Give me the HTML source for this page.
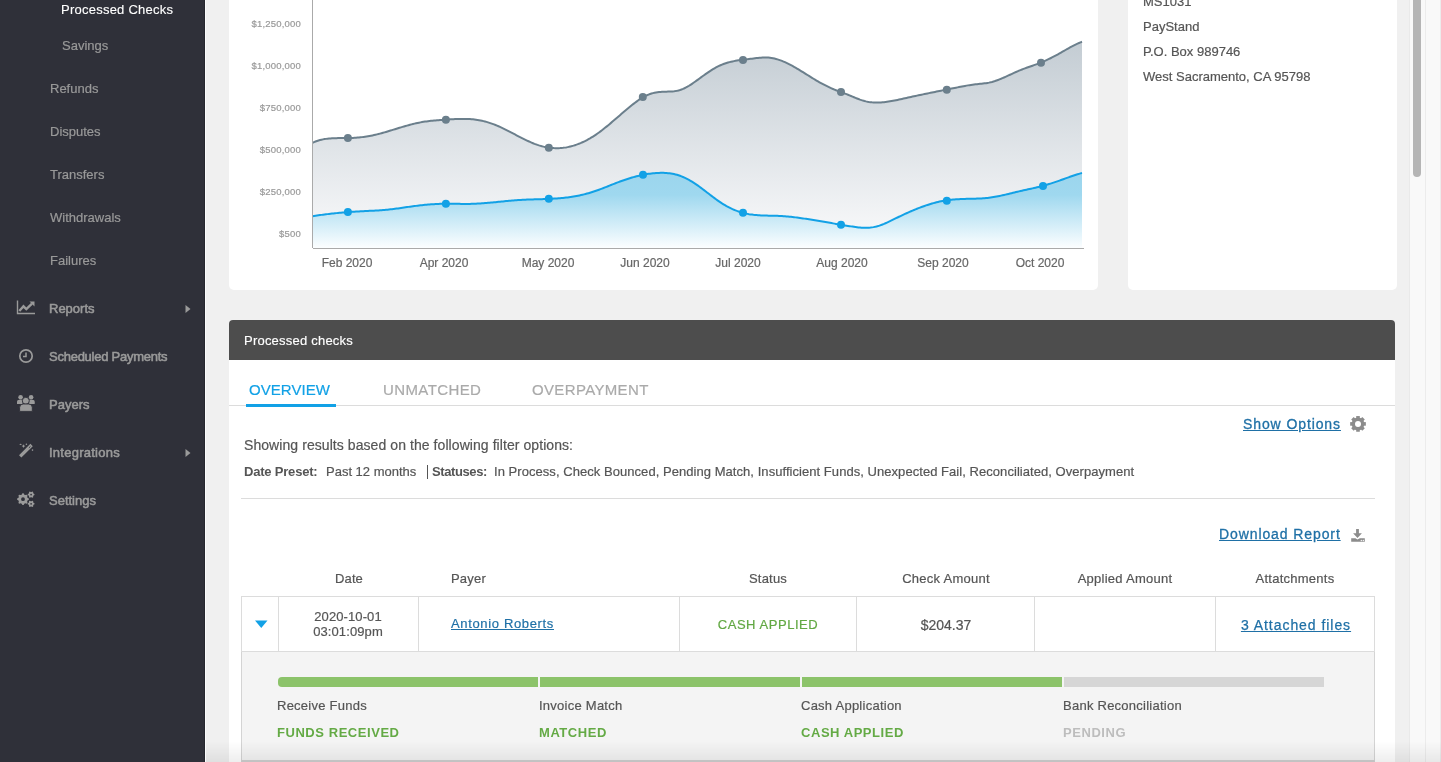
<!DOCTYPE html>
<html><head><meta charset="utf-8"><style>
html,body{margin:0;padding:0;}
body{width:1441px;height:762px;overflow:hidden;position:relative;background:#f0f0f0;font-family:"Liberation Sans",sans-serif;}
.t{position:absolute;white-space:nowrap;will-change:transform;-webkit-text-stroke-width:0.2px;}
.a{position:absolute;}
</style></head><body>
<div class="a" style="left:0;top:0;width:204px;height:762px;background:#2f3039;"></div><div class="a" style="left:204px;top:0;width:1px;height:762px;background:#26272e;"></div><div class="a" style="left:205px;top:0;width:1px;height:762px;background:#fbfbfc;"></div><div class="t" style="left:61.0px;top:3.00px;font-size:13px;line-height:13px;color:#ffffff;letter-spacing:0.24px;-webkit-text-stroke:0.12px #fff;">Processed Checks</div>
<div class="t" style="left:62.0px;top:39.00px;font-size:13px;line-height:13px;color:#999;">Savings</div>
<div class="t" style="left:50.0px;top:81.80px;font-size:13px;line-height:13px;color:#999;">Refunds</div>
<div class="t" style="left:50.0px;top:124.80px;font-size:13px;line-height:13px;color:#999;">Disputes</div>
<div class="t" style="left:50.0px;top:167.80px;font-size:13px;line-height:13px;color:#999;">Transfers</div>
<div class="t" style="left:50.0px;top:210.80px;font-size:13px;line-height:13px;color:#999;">Withdrawals</div>
<div class="t" style="left:50.0px;top:253.80px;font-size:13px;line-height:13px;color:#999;">Failures</div>
<div class="t" style="left:49.0px;top:302.20px;font-size:13px;line-height:13px;color:#9a9a9a;-webkit-text-stroke:0.55px #9a9a9a;">Reports</div>
<div class="t" style="left:49.0px;top:350.20px;font-size:13px;line-height:13px;color:#9a9a9a;-webkit-text-stroke:0.55px #9a9a9a;letter-spacing:-0.25px;">Scheduled Payments</div>
<div class="t" style="left:49.0px;top:398.20px;font-size:13px;line-height:13px;color:#9a9a9a;-webkit-text-stroke:0.55px #9a9a9a;">Payers</div>
<div class="t" style="left:49.0px;top:446.20px;font-size:13px;line-height:13px;color:#9a9a9a;-webkit-text-stroke:0.55px #9a9a9a;letter-spacing:0.25px;">Integrations</div>
<div class="t" style="left:49.0px;top:494.20px;font-size:13px;line-height:13px;color:#9a9a9a;-webkit-text-stroke:0.55px #9a9a9a;">Settings</div>
<svg class="a" style="left:16px;top:300px" width="20" height="15" viewBox="0 0 20 15">
<path d="M1.5 0.5 V13.5 H19" fill="none" stroke="#9a9a9a" stroke-width="1.4"/>
<path d="M3.3 11 L7.5 6.3 L10.3 9 L16 3.6" fill="none" stroke="#9a9a9a" stroke-width="2.4"/>
<path d="M13.5 1.5 H18.5 V6.5 Z" fill="#9a9a9a"/>
</svg><svg class="a" style="left:185px;top:304px" width="6" height="10" viewBox="0 0 6 10"><path d="M0.5 1 L5.5 5 L0.5 9 Z" fill="#9a9a9a"/></svg><svg class="a" style="left:185px;top:448px" width="6" height="10" viewBox="0 0 6 10"><path d="M0.5 1 L5.5 5 L0.5 9 Z" fill="#9a9a9a"/></svg><svg class="a" style="left:18px;top:348px" width="16" height="16" viewBox="0 0 16 16">
<circle cx="8" cy="8" r="6.2" fill="none" stroke="#9a9a9a" stroke-width="1.7"/>
<path d="M8 4.5 V8.5 H5" fill="none" stroke="#9a9a9a" stroke-width="1.5"/>
</svg><svg class="a" style="left:14px;top:392px" width="24" height="22" viewBox="0 0 24 22">
<circle cx="6.6" cy="5.3" r="2.3" fill="#9a9a9a"/><circle cx="17.1" cy="5.3" r="2.3" fill="#9a9a9a"/>
<path d="M3 12.1 V10.2 Q3 7.8 5.6 7.8 H8.6 V12.1 Z" fill="#9a9a9a"/>
<path d="M20.7 12.1 V10.2 Q20.7 7.8 18.1 7.8 H15.1 V12.1 Z" fill="#9a9a9a"/>
<circle cx="11.8" cy="8.8" r="3.5" fill="#9a9a9a" stroke="#2f3039" stroke-width="0.9"/>
<path d="M5.6 19.4 V15.6 Q5.6 12 9.2 12 H14.6 Q18.3 12 18.3 15.6 V19.4 Z" fill="#9a9a9a" stroke="#2f3039" stroke-width="0.9"/>
</svg><svg class="a" style="left:14px;top:440px" width="24" height="22" viewBox="0 0 24 22">
<path d="M6.2 16.4 L17.6 5.0" stroke="#9a9a9a" stroke-width="3.3" stroke-linecap="butt"/>
<path d="M14.9 7.9 L16.5 6.3" stroke="#2f3039" stroke-width="0.9"/>
<path d="M9.5 4.2 L10.1 5.5 L11.4 6.1 L10.1 6.7 L9.5 8.0 L8.9 6.7 L7.6 6.1 L8.9 5.5 Z" fill="#9a9a9a"/>
<ellipse cx="6.6" cy="4.3" rx="1.1" ry="0.6" fill="#9a9a9a"/>
<circle cx="12.4" cy="4.3" r="0.8" fill="#9a9a9a"/>
<circle cx="18.5" cy="10.1" r="0.8" fill="#9a9a9a"/>
</svg><svg class="a" style="left:17px;top:491px" width="18" height="17" viewBox="0 0 18 17">
<path fill-rule="evenodd" d="M11.87 7.62 L11.87 8.78 L10.50 9.56 L10.15 10.42 L10.56 11.94 L9.74 12.76 L8.22 12.35 L7.36 12.70 L6.58 14.07 L5.42 14.07 L4.64 12.70 L3.78 12.35 L2.26 12.76 L1.44 11.94 L1.85 10.42 L1.50 9.56 L0.13 8.78 L0.13 7.62 L1.50 6.84 L1.85 5.98 L1.44 4.46 L2.26 3.64 L3.78 4.05 L4.64 3.70 L5.42 2.33 L6.58 2.33 L7.36 3.70 L8.22 4.05 L9.74 3.64 L10.56 4.46 L10.15 5.98 L10.50 6.84 Z M7.90 8.20 A1.9 1.9 0 1 0 4.10 8.20 A1.9 1.9 0 1 0 7.90 8.20 Z" fill="#9a9a9a"/>
<path fill-rule="evenodd" d="M17.47 3.16 L17.47 4.04 L16.50 4.59 L16.16 5.18 L16.17 6.30 L15.40 6.74 L14.44 6.18 L13.76 6.18 L12.80 6.74 L12.03 6.30 L12.04 5.18 L11.70 4.59 L10.73 4.04 L10.73 3.16 L11.70 2.61 L12.04 2.02 L12.03 0.90 L12.80 0.46 L13.76 1.02 L14.44 1.02 L15.40 0.46 L16.17 0.90 L16.16 2.02 L16.50 2.61 Z M14.95 3.60 A0.85 0.85 0 1 0 13.25 3.60 A0.85 0.85 0 1 0 14.95 3.60 Z" fill="#9a9a9a"/>
<path fill-rule="evenodd" d="M17.47 12.36 L17.47 13.24 L16.50 13.79 L16.16 14.38 L16.17 15.50 L15.40 15.94 L14.44 15.38 L13.76 15.38 L12.80 15.94 L12.03 15.50 L12.04 14.38 L11.70 13.79 L10.73 13.24 L10.73 12.36 L11.70 11.81 L12.04 11.22 L12.03 10.10 L12.80 9.66 L13.76 10.22 L14.44 10.22 L15.40 9.66 L16.17 10.10 L16.16 11.22 L16.50 11.81 Z M14.95 12.80 A0.85 0.85 0 1 0 13.25 12.80 A0.85 0.85 0 1 0 14.95 12.80 Z" fill="#9a9a9a"/>
</svg><div class="a" style="left:229px;top:-20px;width:869px;height:310px;background:#fff;border-radius:5px;"></div><div class="t" style="left:-299.2px;width:600px;text-align:right;top:19.16px;font-size:9.5px;line-height:9.5px;color:#999;letter-spacing:0.2px;">$1,250,000</div>
<div class="t" style="left:-299.2px;width:600px;text-align:right;top:61.16px;font-size:9.5px;line-height:9.5px;color:#999;letter-spacing:0.2px;">$1,000,000</div>
<div class="t" style="left:-299.2px;width:600px;text-align:right;top:103.16px;font-size:9.5px;line-height:9.5px;color:#999;letter-spacing:0.2px;">$750,000</div>
<div class="t" style="left:-299.2px;width:600px;text-align:right;top:145.16px;font-size:9.5px;line-height:9.5px;color:#999;letter-spacing:0.2px;">$500,000</div>
<div class="t" style="left:-299.2px;width:600px;text-align:right;top:187.16px;font-size:9.5px;line-height:9.5px;color:#999;letter-spacing:0.2px;">$250,000</div>
<div class="t" style="left:-299.2px;width:600px;text-align:right;top:229.16px;font-size:9.5px;line-height:9.5px;color:#999;letter-spacing:0.2px;">$500</div>
<div class="t" style="left:46.7px;width:600px;text-align:center;top:256.74px;font-size:12px;line-height:12px;color:#666;">Feb 2020</div>
<div class="t" style="left:143.8px;width:600px;text-align:center;top:256.74px;font-size:12px;line-height:12px;color:#666;">Apr 2020</div>
<div class="t" style="left:247.9px;width:600px;text-align:center;top:256.74px;font-size:12px;line-height:12px;color:#666;">May 2020</div>
<div class="t" style="left:345.3px;width:600px;text-align:center;top:256.74px;font-size:12px;line-height:12px;color:#666;">Jun 2020</div>
<div class="t" style="left:438.3px;width:600px;text-align:center;top:256.74px;font-size:12px;line-height:12px;color:#666;">Jul 2020</div>
<div class="t" style="left:542.0px;width:600px;text-align:center;top:256.74px;font-size:12px;line-height:12px;color:#666;">Aug 2020</div>
<div class="t" style="left:642.9px;width:600px;text-align:center;top:256.74px;font-size:12px;line-height:12px;color:#666;">Sep 2020</div>
<div class="t" style="left:740.0px;width:600px;text-align:center;top:256.74px;font-size:12px;line-height:12px;color:#666;">Oct 2020</div>
<svg class="a" style="left:0;top:0" width="1441" height="300" viewBox="0 0 1441 300">
<defs>
<linearGradient id="gg" x1="0" y1="41" x2="0" y2="248" gradientUnits="userSpaceOnUse">
<stop offset="0" stop-color="#c3ccd3"/><stop offset="1" stop-color="#fbfbfc"/></linearGradient>
<linearGradient id="bg" x1="0" y1="172" x2="0" y2="248" gradientUnits="userSpaceOnUse">
<stop offset="0" stop-color="#9bd5ed"/><stop offset="0.3" stop-color="#9fd8ef"/><stop offset="1" stop-color="#fcfeff"/></linearGradient>
</defs>
<path d="M312.50 142.79 L314.00 142.12 L315.50 141.52 L317.00 140.98 L318.50 140.50 L320.00 140.08 L321.50 139.71 L323.00 139.39 L324.50 139.11 L326.00 138.88 L327.50 138.69 L329.00 138.53 L330.50 138.40 L332.00 138.30 L333.50 138.23 L335.00 138.17 L336.50 138.14 L338.00 138.11 L339.50 138.10 L341.00 138.09 L342.50 138.09 L344.00 138.09 L345.50 138.08 L347.00 138.06 L348.50 138.04 L350.00 138.00 L351.50 137.95 L353.00 137.88 L354.50 137.79 L356.00 137.70 L357.50 137.58 L359.00 137.45 L360.50 137.30 L362.00 137.13 L363.50 136.95 L365.00 136.74 L366.50 136.52 L368.00 136.27 L369.50 136.00 L371.00 135.72 L372.50 135.41 L374.00 135.08 L375.50 134.74 L377.00 134.38 L378.50 134.00 L380.00 133.61 L381.50 133.20 L383.00 132.78 L384.50 132.36 L386.00 131.92 L387.50 131.48 L389.00 131.03 L390.50 130.57 L392.00 130.11 L393.50 129.65 L395.00 129.19 L396.50 128.72 L398.00 128.26 L399.50 127.80 L401.00 127.35 L402.50 126.89 L404.00 126.45 L405.50 126.01 L407.00 125.59 L408.50 125.17 L410.00 124.76 L411.50 124.37 L413.00 123.99 L414.50 123.63 L416.00 123.28 L417.50 122.95 L419.00 122.65 L420.50 122.36 L422.00 122.09 L423.50 121.84 L425.00 121.61 L426.50 121.40 L428.00 121.21 L429.50 121.03 L431.00 120.86 L432.50 120.70 L434.00 120.56 L435.50 120.43 L437.00 120.30 L438.50 120.18 L440.00 120.07 L441.50 119.97 L443.00 119.86 L444.50 119.76 L446.00 119.66 L447.50 119.56 L449.00 119.46 L450.50 119.37 L452.00 119.28 L453.50 119.19 L455.00 119.11 L456.50 119.04 L458.00 118.99 L459.50 118.94 L461.00 118.91 L462.50 118.89 L464.00 118.89 L465.50 118.91 L467.00 118.95 L468.50 119.01 L470.00 119.09 L471.50 119.20 L473.00 119.33 L474.50 119.49 L476.00 119.68 L477.50 119.90 L479.00 120.15 L480.50 120.43 L482.00 120.75 L483.50 121.10 L485.00 121.49 L486.50 121.90 L488.00 122.35 L489.50 122.83 L491.00 123.33 L492.50 123.87 L494.00 124.43 L495.50 125.02 L497.00 125.64 L498.50 126.28 L500.00 126.94 L501.50 127.63 L503.00 128.34 L504.50 129.06 L506.00 129.81 L507.50 130.57 L509.00 131.34 L510.50 132.11 L512.00 132.90 L513.50 133.69 L515.00 134.48 L516.50 135.27 L518.00 136.06 L519.50 136.84 L521.00 137.61 L522.50 138.37 L524.00 139.13 L525.50 139.86 L527.00 140.58 L528.50 141.28 L530.00 141.96 L531.50 142.61 L533.00 143.23 L534.50 143.83 L536.00 144.39 L537.50 144.92 L539.00 145.41 L540.50 145.86 L542.00 146.28 L543.50 146.65 L545.00 146.98 L546.50 147.27 L548.00 147.52 L549.50 147.73 L551.00 147.90 L552.50 148.03 L554.00 148.12 L555.50 148.17 L557.00 148.18 L558.50 148.14 L560.00 148.07 L561.50 147.96 L563.00 147.81 L564.50 147.62 L566.00 147.39 L567.50 147.12 L569.00 146.81 L570.50 146.46 L572.00 146.08 L573.50 145.65 L575.00 145.18 L576.50 144.68 L578.00 144.13 L579.50 143.55 L581.00 142.93 L582.50 142.26 L584.00 141.56 L585.50 140.83 L587.00 140.05 L588.50 139.23 L590.00 138.38 L591.50 137.48 L593.00 136.55 L594.50 135.58 L596.00 134.57 L597.50 133.53 L599.00 132.45 L600.50 131.34 L602.00 130.20 L603.50 129.03 L605.00 127.84 L606.50 126.63 L608.00 125.40 L609.50 124.15 L611.00 122.89 L612.50 121.61 L614.00 120.33 L615.50 119.03 L617.00 117.74 L618.50 116.44 L620.00 115.14 L621.50 113.85 L623.00 112.56 L624.50 111.27 L626.00 110.00 L627.50 108.74 L629.00 107.50 L630.50 106.27 L632.00 105.06 L633.50 103.88 L635.00 102.72 L636.50 101.59 L638.00 100.50 L639.50 99.45 L641.00 98.46 L642.50 97.54 L644.00 96.70 L645.50 95.93 L647.00 95.24 L648.50 94.62 L650.00 94.07 L651.50 93.58 L653.00 93.15 L654.50 92.79 L656.00 92.48 L657.50 92.23 L659.00 92.03 L660.50 91.89 L662.00 91.78 L663.50 91.71 L665.00 91.67 L666.50 91.63 L668.00 91.60 L669.50 91.56 L671.00 91.49 L672.50 91.40 L674.00 91.26 L675.50 91.06 L677.00 90.81 L678.50 90.47 L680.00 90.05 L681.50 89.53 L683.00 88.93 L684.50 88.24 L686.00 87.47 L687.50 86.64 L689.00 85.75 L690.50 84.80 L692.00 83.81 L693.50 82.79 L695.00 81.73 L696.50 80.66 L698.00 79.57 L699.50 78.47 L701.00 77.37 L702.50 76.29 L704.00 75.21 L705.50 74.15 L707.00 73.10 L708.50 72.08 L710.00 71.09 L711.50 70.13 L713.00 69.20 L714.50 68.31 L716.00 67.47 L717.50 66.67 L719.00 65.92 L720.50 65.22 L722.00 64.59 L723.50 64.00 L725.00 63.47 L726.50 62.98 L728.00 62.53 L729.50 62.13 L731.00 61.76 L732.50 61.43 L734.00 61.12 L735.50 60.85 L737.00 60.59 L738.50 60.36 L740.00 60.14 L741.50 59.94 L743.00 59.75 L744.50 59.56 L746.00 59.38 L747.50 59.20 L749.00 59.02 L750.50 58.83 L752.00 58.64 L753.50 58.44 L755.00 58.25 L756.50 58.07 L758.00 57.90 L759.50 57.76 L761.00 57.64 L762.50 57.55 L764.00 57.49 L765.50 57.48 L767.00 57.52 L768.50 57.60 L770.00 57.75 L771.50 57.95 L773.00 58.22 L774.50 58.54 L776.00 58.92 L777.50 59.35 L779.00 59.83 L780.50 60.36 L782.00 60.93 L783.50 61.55 L785.00 62.20 L786.50 62.89 L788.00 63.62 L789.50 64.38 L791.00 65.16 L792.50 65.98 L794.00 66.81 L795.50 67.67 L797.00 68.55 L798.50 69.45 L800.00 70.36 L801.50 71.28 L803.00 72.21 L804.50 73.14 L806.00 74.08 L807.50 75.02 L809.00 75.96 L810.50 76.89 L812.00 77.82 L813.50 78.74 L815.00 79.65 L816.50 80.54 L818.00 81.42 L819.50 82.27 L821.00 83.11 L822.50 83.92 L824.00 84.71 L825.50 85.47 L827.00 86.22 L828.50 86.94 L830.00 87.64 L831.50 88.33 L833.00 88.99 L834.50 89.63 L836.00 90.25 L837.50 90.84 L839.00 91.42 L840.50 91.98 L842.00 92.53 L843.50 93.06 L845.00 93.61 L846.50 94.18 L848.00 94.77 L849.50 95.38 L851.00 96.01 L852.50 96.63 L854.00 97.25 L855.50 97.87 L857.00 98.46 L858.50 99.04 L860.00 99.59 L861.50 100.10 L863.00 100.57 L864.50 101.00 L866.00 101.37 L867.50 101.68 L869.00 101.95 L870.50 102.16 L872.00 102.32 L873.50 102.44 L875.00 102.52 L876.50 102.55 L878.00 102.55 L879.50 102.50 L881.00 102.43 L882.50 102.31 L884.00 102.17 L885.50 102.00 L887.00 101.81 L888.50 101.59 L890.00 101.35 L891.50 101.09 L893.00 100.81 L894.50 100.52 L896.00 100.21 L897.50 99.90 L899.00 99.57 L900.50 99.24 L902.00 98.91 L903.50 98.57 L905.00 98.23 L906.50 97.90 L908.00 97.57 L909.50 97.24 L911.00 96.91 L912.50 96.58 L914.00 96.26 L915.50 95.94 L917.00 95.62 L918.50 95.30 L920.00 94.99 L921.50 94.67 L923.00 94.36 L924.50 94.05 L926.00 93.74 L927.50 93.43 L929.00 93.12 L930.50 92.81 L932.00 92.51 L933.50 92.20 L935.00 91.90 L936.50 91.59 L938.00 91.29 L939.50 90.99 L941.00 90.69 L942.50 90.38 L944.00 90.08 L945.50 89.78 L947.00 89.48 L948.50 89.18 L950.00 88.88 L951.50 88.57 L953.00 88.27 L954.50 87.97 L956.00 87.66 L957.50 87.36 L959.00 87.06 L960.50 86.76 L962.00 86.47 L963.50 86.18 L965.00 85.91 L966.50 85.64 L968.00 85.38 L969.50 85.14 L971.00 84.91 L972.50 84.69 L974.00 84.49 L975.50 84.32 L977.00 84.15 L978.50 84.00 L980.00 83.85 L981.50 83.70 L983.00 83.54 L984.50 83.36 L986.00 83.15 L987.50 82.90 L989.00 82.62 L990.50 82.29 L992.00 81.91 L993.50 81.48 L995.00 81.01 L996.50 80.49 L998.00 79.94 L999.50 79.36 L1001.00 78.76 L1002.50 78.12 L1004.00 77.47 L1005.50 76.80 L1007.00 76.12 L1008.50 75.43 L1010.00 74.74 L1011.50 74.04 L1013.00 73.35 L1014.50 72.66 L1016.00 71.99 L1017.50 71.33 L1019.00 70.69 L1020.50 70.07 L1022.00 69.48 L1023.50 68.91 L1025.00 68.35 L1026.50 67.81 L1028.00 67.28 L1029.50 66.75 L1031.00 66.23 L1032.50 65.70 L1034.00 65.17 L1035.50 64.64 L1037.00 64.09 L1038.50 63.52 L1040.00 62.94 L1041.50 62.33 L1043.00 61.71 L1044.50 61.05 L1046.00 60.38 L1047.50 59.68 L1049.00 58.96 L1050.50 58.23 L1052.00 57.47 L1053.50 56.69 L1055.00 55.90 L1056.50 55.10 L1058.00 54.27 L1059.50 53.44 L1061.00 52.59 L1062.50 51.73 L1064.00 50.87 L1065.50 50.00 L1067.00 49.14 L1068.50 48.29 L1070.00 47.45 L1071.50 46.63 L1073.00 45.84 L1074.50 45.07 L1076.00 44.33 L1077.50 43.63 L1079.00 42.97 L1080.50 42.36 L1082.00 41.79 L1082 248 L312.5 248 Z" fill="url(#gg)"/>
<path d="M312.50 216.17 L314.00 215.94 L315.50 215.72 L317.00 215.50 L318.50 215.29 L320.00 215.08 L321.50 214.88 L323.00 214.68 L324.50 214.49 L326.00 214.30 L327.50 214.12 L329.00 213.94 L330.50 213.77 L332.00 213.60 L333.50 213.44 L335.00 213.29 L336.50 213.13 L338.00 212.99 L339.50 212.84 L341.00 212.70 L342.50 212.57 L344.00 212.44 L345.50 212.32 L347.00 212.19 L348.50 212.08 L350.00 211.97 L351.50 211.86 L353.00 211.76 L354.50 211.66 L356.00 211.56 L357.50 211.47 L359.00 211.39 L360.50 211.30 L362.00 211.23 L363.50 211.15 L365.00 211.08 L366.50 211.00 L368.00 210.93 L369.50 210.86 L371.00 210.79 L372.50 210.71 L374.00 210.63 L375.50 210.55 L377.00 210.47 L378.50 210.38 L380.00 210.28 L381.50 210.17 L383.00 210.06 L384.50 209.94 L386.00 209.81 L387.50 209.67 L389.00 209.52 L390.50 209.36 L392.00 209.19 L393.50 209.00 L395.00 208.81 L396.50 208.61 L398.00 208.40 L399.50 208.18 L401.00 207.97 L402.50 207.75 L404.00 207.53 L405.50 207.31 L407.00 207.09 L408.50 206.87 L410.00 206.66 L411.50 206.45 L413.00 206.25 L414.50 206.05 L416.00 205.87 L417.50 205.68 L419.00 205.51 L420.50 205.34 L422.00 205.17 L423.50 205.02 L425.00 204.87 L426.50 204.73 L428.00 204.60 L429.50 204.48 L431.00 204.36 L432.50 204.26 L434.00 204.16 L435.50 204.07 L437.00 203.99 L438.50 203.92 L440.00 203.86 L441.50 203.81 L443.00 203.77 L444.50 203.74 L446.00 203.72 L447.50 203.71 L449.00 203.71 L450.50 203.72 L452.00 203.73 L453.50 203.75 L455.00 203.78 L456.50 203.80 L458.00 203.83 L459.50 203.85 L461.00 203.88 L462.50 203.89 L464.00 203.91 L465.50 203.92 L467.00 203.91 L468.50 203.90 L470.00 203.88 L471.50 203.85 L473.00 203.81 L474.50 203.75 L476.00 203.68 L477.50 203.61 L479.00 203.52 L480.50 203.43 L482.00 203.33 L483.50 203.22 L485.00 203.10 L486.50 202.98 L488.00 202.85 L489.50 202.72 L491.00 202.58 L492.50 202.44 L494.00 202.30 L495.50 202.15 L497.00 202.00 L498.50 201.85 L500.00 201.70 L501.50 201.55 L503.00 201.41 L504.50 201.26 L506.00 201.11 L507.50 200.97 L509.00 200.83 L510.50 200.69 L512.00 200.56 L513.50 200.44 L515.00 200.32 L516.50 200.20 L518.00 200.10 L519.50 200.00 L521.00 199.91 L522.50 199.82 L524.00 199.75 L525.50 199.68 L527.00 199.61 L528.50 199.55 L530.00 199.50 L531.50 199.45 L533.00 199.40 L534.50 199.35 L536.00 199.31 L537.50 199.27 L539.00 199.22 L540.50 199.18 L542.00 199.13 L543.50 199.08 L545.00 199.03 L546.50 198.98 L548.00 198.92 L549.50 198.85 L551.00 198.78 L552.50 198.71 L554.00 198.62 L555.50 198.53 L557.00 198.43 L558.50 198.32 L560.00 198.20 L561.50 198.07 L563.00 197.93 L564.50 197.77 L566.00 197.60 L567.50 197.42 L569.00 197.23 L570.50 197.01 L572.00 196.79 L573.50 196.54 L575.00 196.28 L576.50 196.01 L578.00 195.72 L579.50 195.41 L581.00 195.08 L582.50 194.73 L584.00 194.37 L585.50 193.99 L587.00 193.59 L588.50 193.18 L590.00 192.74 L591.50 192.29 L593.00 191.81 L594.50 191.32 L596.00 190.81 L597.50 190.27 L599.00 189.73 L600.50 189.17 L602.00 188.59 L603.50 188.01 L605.00 187.42 L606.50 186.82 L608.00 186.22 L609.50 185.62 L611.00 185.02 L612.50 184.43 L614.00 183.84 L615.50 183.25 L617.00 182.68 L618.50 182.12 L620.00 181.56 L621.50 181.02 L623.00 180.49 L624.50 179.97 L626.00 179.46 L627.50 178.97 L629.00 178.49 L630.50 178.03 L632.00 177.58 L633.50 177.15 L635.00 176.74 L636.50 176.34 L638.00 175.96 L639.50 175.60 L641.00 175.26 L642.50 174.93 L644.00 174.63 L645.50 174.35 L647.00 174.09 L648.50 173.86 L650.00 173.64 L651.50 173.45 L653.00 173.29 L654.50 173.15 L656.00 173.03 L657.50 172.94 L659.00 172.88 L660.50 172.84 L662.00 172.84 L663.50 172.86 L665.00 172.92 L666.50 173.01 L668.00 173.14 L669.50 173.31 L671.00 173.52 L672.50 173.78 L674.00 174.08 L675.50 174.43 L677.00 174.83 L678.50 175.28 L680.00 175.79 L681.50 176.35 L683.00 176.97 L684.50 177.65 L686.00 178.37 L687.50 179.14 L689.00 179.96 L690.50 180.81 L692.00 181.72 L693.50 182.65 L695.00 183.63 L696.50 184.64 L698.00 185.68 L699.50 186.75 L701.00 187.85 L702.50 188.97 L704.00 190.11 L705.50 191.26 L707.00 192.42 L708.50 193.58 L710.00 194.74 L711.50 195.90 L713.00 197.04 L714.50 198.17 L716.00 199.28 L717.50 200.36 L719.00 201.41 L720.50 202.42 L722.00 203.40 L723.50 204.33 L725.00 205.23 L726.50 206.09 L728.00 206.90 L729.50 207.67 L731.00 208.40 L732.50 209.09 L734.00 209.74 L735.50 210.35 L737.00 210.92 L738.50 211.45 L740.00 211.94 L741.50 212.39 L743.00 212.81 L744.50 213.20 L746.00 213.55 L747.50 213.86 L749.00 214.15 L750.50 214.40 L752.00 214.61 L753.50 214.81 L755.00 214.97 L756.50 215.11 L758.00 215.23 L759.50 215.33 L761.00 215.41 L762.50 215.48 L764.00 215.53 L765.50 215.58 L767.00 215.62 L768.50 215.65 L770.00 215.68 L771.50 215.70 L773.00 215.73 L774.50 215.77 L776.00 215.81 L777.50 215.85 L779.00 215.91 L780.50 215.99 L782.00 216.07 L783.50 216.17 L785.00 216.29 L786.50 216.41 L788.00 216.55 L789.50 216.70 L791.00 216.86 L792.50 217.02 L794.00 217.20 L795.50 217.38 L797.00 217.58 L798.50 217.78 L800.00 217.98 L801.50 218.19 L803.00 218.41 L804.50 218.63 L806.00 218.85 L807.50 219.08 L809.00 219.32 L810.50 219.55 L812.00 219.79 L813.50 220.04 L815.00 220.28 L816.50 220.53 L818.00 220.78 L819.50 221.04 L821.00 221.29 L822.50 221.55 L824.00 221.81 L825.50 222.07 L827.00 222.33 L828.50 222.59 L830.00 222.85 L831.50 223.11 L833.00 223.37 L834.50 223.63 L836.00 223.89 L837.50 224.15 L839.00 224.40 L840.50 224.66 L842.00 224.91 L843.50 225.16 L845.00 225.41 L846.50 225.66 L848.00 225.90 L849.50 226.14 L851.00 226.38 L852.50 226.61 L854.00 226.83 L855.50 227.03 L857.00 227.22 L858.50 227.39 L860.00 227.54 L861.50 227.66 L863.00 227.74 L864.50 227.79 L866.00 227.80 L867.50 227.77 L869.00 227.69 L870.50 227.56 L872.00 227.38 L873.50 227.14 L875.00 226.84 L876.50 226.48 L878.00 226.05 L879.50 225.58 L881.00 225.05 L882.50 224.48 L884.00 223.87 L885.50 223.22 L887.00 222.55 L888.50 221.86 L890.00 221.15 L891.50 220.42 L893.00 219.69 L894.50 218.95 L896.00 218.22 L897.50 217.50 L899.00 216.77 L900.50 216.06 L902.00 215.35 L903.50 214.65 L905.00 213.96 L906.50 213.27 L908.00 212.60 L909.50 211.93 L911.00 211.28 L912.50 210.64 L914.00 210.00 L915.50 209.38 L917.00 208.78 L918.50 208.18 L920.00 207.60 L921.50 207.04 L923.00 206.49 L924.50 205.95 L926.00 205.43 L927.50 204.93 L929.00 204.45 L930.50 203.98 L932.00 203.54 L933.50 203.11 L935.00 202.70 L936.50 202.31 L938.00 201.94 L939.50 201.60 L941.00 201.27 L942.50 200.97 L944.00 200.70 L945.50 200.44 L947.00 200.21 L948.50 200.01 L950.00 199.83 L951.50 199.67 L953.00 199.53 L954.50 199.40 L956.00 199.30 L957.50 199.21 L959.00 199.13 L960.50 199.06 L962.00 199.00 L963.50 198.96 L965.00 198.91 L966.50 198.87 L968.00 198.84 L969.50 198.81 L971.00 198.77 L972.50 198.73 L974.00 198.69 L975.50 198.65 L977.00 198.60 L978.50 198.54 L980.00 198.46 L981.50 198.38 L983.00 198.28 L984.50 198.17 L986.00 198.04 L987.50 197.89 L989.00 197.72 L990.50 197.53 L992.00 197.32 L993.50 197.08 L995.00 196.82 L996.50 196.55 L998.00 196.26 L999.50 195.96 L1001.00 195.64 L1002.50 195.31 L1004.00 194.97 L1005.50 194.62 L1007.00 194.27 L1008.50 193.91 L1010.00 193.54 L1011.50 193.17 L1013.00 192.80 L1014.50 192.44 L1016.00 192.07 L1017.50 191.71 L1019.00 191.35 L1020.50 191.01 L1022.00 190.66 L1023.50 190.33 L1025.00 190.00 L1026.50 189.67 L1028.00 189.34 L1029.50 189.02 L1031.00 188.69 L1032.50 188.36 L1034.00 188.02 L1035.50 187.68 L1037.00 187.33 L1038.50 186.97 L1040.00 186.60 L1041.50 186.21 L1043.00 185.82 L1044.50 185.40 L1046.00 184.98 L1047.50 184.54 L1049.00 184.08 L1050.50 183.62 L1052.00 183.14 L1053.50 182.65 L1055.00 182.15 L1056.50 181.64 L1058.00 181.12 L1059.50 180.59 L1061.00 180.06 L1062.50 179.51 L1064.00 178.97 L1065.50 178.42 L1067.00 177.88 L1068.50 177.34 L1070.00 176.80 L1071.50 176.27 L1073.00 175.76 L1074.50 175.25 L1076.00 174.76 L1077.50 174.29 L1079.00 173.84 L1080.50 173.40 L1082.00 173.00 L1082 248 L312.5 248 Z" fill="url(#bg)"/>
<path d="M312.50 142.79 L314.00 142.12 L315.50 141.52 L317.00 140.98 L318.50 140.50 L320.00 140.08 L321.50 139.71 L323.00 139.39 L324.50 139.11 L326.00 138.88 L327.50 138.69 L329.00 138.53 L330.50 138.40 L332.00 138.30 L333.50 138.23 L335.00 138.17 L336.50 138.14 L338.00 138.11 L339.50 138.10 L341.00 138.09 L342.50 138.09 L344.00 138.09 L345.50 138.08 L347.00 138.06 L348.50 138.04 L350.00 138.00 L351.50 137.95 L353.00 137.88 L354.50 137.79 L356.00 137.70 L357.50 137.58 L359.00 137.45 L360.50 137.30 L362.00 137.13 L363.50 136.95 L365.00 136.74 L366.50 136.52 L368.00 136.27 L369.50 136.00 L371.00 135.72 L372.50 135.41 L374.00 135.08 L375.50 134.74 L377.00 134.38 L378.50 134.00 L380.00 133.61 L381.50 133.20 L383.00 132.78 L384.50 132.36 L386.00 131.92 L387.50 131.48 L389.00 131.03 L390.50 130.57 L392.00 130.11 L393.50 129.65 L395.00 129.19 L396.50 128.72 L398.00 128.26 L399.50 127.80 L401.00 127.35 L402.50 126.89 L404.00 126.45 L405.50 126.01 L407.00 125.59 L408.50 125.17 L410.00 124.76 L411.50 124.37 L413.00 123.99 L414.50 123.63 L416.00 123.28 L417.50 122.95 L419.00 122.65 L420.50 122.36 L422.00 122.09 L423.50 121.84 L425.00 121.61 L426.50 121.40 L428.00 121.21 L429.50 121.03 L431.00 120.86 L432.50 120.70 L434.00 120.56 L435.50 120.43 L437.00 120.30 L438.50 120.18 L440.00 120.07 L441.50 119.97 L443.00 119.86 L444.50 119.76 L446.00 119.66 L447.50 119.56 L449.00 119.46 L450.50 119.37 L452.00 119.28 L453.50 119.19 L455.00 119.11 L456.50 119.04 L458.00 118.99 L459.50 118.94 L461.00 118.91 L462.50 118.89 L464.00 118.89 L465.50 118.91 L467.00 118.95 L468.50 119.01 L470.00 119.09 L471.50 119.20 L473.00 119.33 L474.50 119.49 L476.00 119.68 L477.50 119.90 L479.00 120.15 L480.50 120.43 L482.00 120.75 L483.50 121.10 L485.00 121.49 L486.50 121.90 L488.00 122.35 L489.50 122.83 L491.00 123.33 L492.50 123.87 L494.00 124.43 L495.50 125.02 L497.00 125.64 L498.50 126.28 L500.00 126.94 L501.50 127.63 L503.00 128.34 L504.50 129.06 L506.00 129.81 L507.50 130.57 L509.00 131.34 L510.50 132.11 L512.00 132.90 L513.50 133.69 L515.00 134.48 L516.50 135.27 L518.00 136.06 L519.50 136.84 L521.00 137.61 L522.50 138.37 L524.00 139.13 L525.50 139.86 L527.00 140.58 L528.50 141.28 L530.00 141.96 L531.50 142.61 L533.00 143.23 L534.50 143.83 L536.00 144.39 L537.50 144.92 L539.00 145.41 L540.50 145.86 L542.00 146.28 L543.50 146.65 L545.00 146.98 L546.50 147.27 L548.00 147.52 L549.50 147.73 L551.00 147.90 L552.50 148.03 L554.00 148.12 L555.50 148.17 L557.00 148.18 L558.50 148.14 L560.00 148.07 L561.50 147.96 L563.00 147.81 L564.50 147.62 L566.00 147.39 L567.50 147.12 L569.00 146.81 L570.50 146.46 L572.00 146.08 L573.50 145.65 L575.00 145.18 L576.50 144.68 L578.00 144.13 L579.50 143.55 L581.00 142.93 L582.50 142.26 L584.00 141.56 L585.50 140.83 L587.00 140.05 L588.50 139.23 L590.00 138.38 L591.50 137.48 L593.00 136.55 L594.50 135.58 L596.00 134.57 L597.50 133.53 L599.00 132.45 L600.50 131.34 L602.00 130.20 L603.50 129.03 L605.00 127.84 L606.50 126.63 L608.00 125.40 L609.50 124.15 L611.00 122.89 L612.50 121.61 L614.00 120.33 L615.50 119.03 L617.00 117.74 L618.50 116.44 L620.00 115.14 L621.50 113.85 L623.00 112.56 L624.50 111.27 L626.00 110.00 L627.50 108.74 L629.00 107.50 L630.50 106.27 L632.00 105.06 L633.50 103.88 L635.00 102.72 L636.50 101.59 L638.00 100.50 L639.50 99.45 L641.00 98.46 L642.50 97.54 L644.00 96.70 L645.50 95.93 L647.00 95.24 L648.50 94.62 L650.00 94.07 L651.50 93.58 L653.00 93.15 L654.50 92.79 L656.00 92.48 L657.50 92.23 L659.00 92.03 L660.50 91.89 L662.00 91.78 L663.50 91.71 L665.00 91.67 L666.50 91.63 L668.00 91.60 L669.50 91.56 L671.00 91.49 L672.50 91.40 L674.00 91.26 L675.50 91.06 L677.00 90.81 L678.50 90.47 L680.00 90.05 L681.50 89.53 L683.00 88.93 L684.50 88.24 L686.00 87.47 L687.50 86.64 L689.00 85.75 L690.50 84.80 L692.00 83.81 L693.50 82.79 L695.00 81.73 L696.50 80.66 L698.00 79.57 L699.50 78.47 L701.00 77.37 L702.50 76.29 L704.00 75.21 L705.50 74.15 L707.00 73.10 L708.50 72.08 L710.00 71.09 L711.50 70.13 L713.00 69.20 L714.50 68.31 L716.00 67.47 L717.50 66.67 L719.00 65.92 L720.50 65.22 L722.00 64.59 L723.50 64.00 L725.00 63.47 L726.50 62.98 L728.00 62.53 L729.50 62.13 L731.00 61.76 L732.50 61.43 L734.00 61.12 L735.50 60.85 L737.00 60.59 L738.50 60.36 L740.00 60.14 L741.50 59.94 L743.00 59.75 L744.50 59.56 L746.00 59.38 L747.50 59.20 L749.00 59.02 L750.50 58.83 L752.00 58.64 L753.50 58.44 L755.00 58.25 L756.50 58.07 L758.00 57.90 L759.50 57.76 L761.00 57.64 L762.50 57.55 L764.00 57.49 L765.50 57.48 L767.00 57.52 L768.50 57.60 L770.00 57.75 L771.50 57.95 L773.00 58.22 L774.50 58.54 L776.00 58.92 L777.50 59.35 L779.00 59.83 L780.50 60.36 L782.00 60.93 L783.50 61.55 L785.00 62.20 L786.50 62.89 L788.00 63.62 L789.50 64.38 L791.00 65.16 L792.50 65.98 L794.00 66.81 L795.50 67.67 L797.00 68.55 L798.50 69.45 L800.00 70.36 L801.50 71.28 L803.00 72.21 L804.50 73.14 L806.00 74.08 L807.50 75.02 L809.00 75.96 L810.50 76.89 L812.00 77.82 L813.50 78.74 L815.00 79.65 L816.50 80.54 L818.00 81.42 L819.50 82.27 L821.00 83.11 L822.50 83.92 L824.00 84.71 L825.50 85.47 L827.00 86.22 L828.50 86.94 L830.00 87.64 L831.50 88.33 L833.00 88.99 L834.50 89.63 L836.00 90.25 L837.50 90.84 L839.00 91.42 L840.50 91.98 L842.00 92.53 L843.50 93.06 L845.00 93.61 L846.50 94.18 L848.00 94.77 L849.50 95.38 L851.00 96.01 L852.50 96.63 L854.00 97.25 L855.50 97.87 L857.00 98.46 L858.50 99.04 L860.00 99.59 L861.50 100.10 L863.00 100.57 L864.50 101.00 L866.00 101.37 L867.50 101.68 L869.00 101.95 L870.50 102.16 L872.00 102.32 L873.50 102.44 L875.00 102.52 L876.50 102.55 L878.00 102.55 L879.50 102.50 L881.00 102.43 L882.50 102.31 L884.00 102.17 L885.50 102.00 L887.00 101.81 L888.50 101.59 L890.00 101.35 L891.50 101.09 L893.00 100.81 L894.50 100.52 L896.00 100.21 L897.50 99.90 L899.00 99.57 L900.50 99.24 L902.00 98.91 L903.50 98.57 L905.00 98.23 L906.50 97.90 L908.00 97.57 L909.50 97.24 L911.00 96.91 L912.50 96.58 L914.00 96.26 L915.50 95.94 L917.00 95.62 L918.50 95.30 L920.00 94.99 L921.50 94.67 L923.00 94.36 L924.50 94.05 L926.00 93.74 L927.50 93.43 L929.00 93.12 L930.50 92.81 L932.00 92.51 L933.50 92.20 L935.00 91.90 L936.50 91.59 L938.00 91.29 L939.50 90.99 L941.00 90.69 L942.50 90.38 L944.00 90.08 L945.50 89.78 L947.00 89.48 L948.50 89.18 L950.00 88.88 L951.50 88.57 L953.00 88.27 L954.50 87.97 L956.00 87.66 L957.50 87.36 L959.00 87.06 L960.50 86.76 L962.00 86.47 L963.50 86.18 L965.00 85.91 L966.50 85.64 L968.00 85.38 L969.50 85.14 L971.00 84.91 L972.50 84.69 L974.00 84.49 L975.50 84.32 L977.00 84.15 L978.50 84.00 L980.00 83.85 L981.50 83.70 L983.00 83.54 L984.50 83.36 L986.00 83.15 L987.50 82.90 L989.00 82.62 L990.50 82.29 L992.00 81.91 L993.50 81.48 L995.00 81.01 L996.50 80.49 L998.00 79.94 L999.50 79.36 L1001.00 78.76 L1002.50 78.12 L1004.00 77.47 L1005.50 76.80 L1007.00 76.12 L1008.50 75.43 L1010.00 74.74 L1011.50 74.04 L1013.00 73.35 L1014.50 72.66 L1016.00 71.99 L1017.50 71.33 L1019.00 70.69 L1020.50 70.07 L1022.00 69.48 L1023.50 68.91 L1025.00 68.35 L1026.50 67.81 L1028.00 67.28 L1029.50 66.75 L1031.00 66.23 L1032.50 65.70 L1034.00 65.17 L1035.50 64.64 L1037.00 64.09 L1038.50 63.52 L1040.00 62.94 L1041.50 62.33 L1043.00 61.71 L1044.50 61.05 L1046.00 60.38 L1047.50 59.68 L1049.00 58.96 L1050.50 58.23 L1052.00 57.47 L1053.50 56.69 L1055.00 55.90 L1056.50 55.10 L1058.00 54.27 L1059.50 53.44 L1061.00 52.59 L1062.50 51.73 L1064.00 50.87 L1065.50 50.00 L1067.00 49.14 L1068.50 48.29 L1070.00 47.45 L1071.50 46.63 L1073.00 45.84 L1074.50 45.07 L1076.00 44.33 L1077.50 43.63 L1079.00 42.97 L1080.50 42.36 L1082.00 41.79" fill="none" stroke="#6b7f8c" stroke-width="2"/>
<path d="M312.50 216.17 L314.00 215.94 L315.50 215.72 L317.00 215.50 L318.50 215.29 L320.00 215.08 L321.50 214.88 L323.00 214.68 L324.50 214.49 L326.00 214.30 L327.50 214.12 L329.00 213.94 L330.50 213.77 L332.00 213.60 L333.50 213.44 L335.00 213.29 L336.50 213.13 L338.00 212.99 L339.50 212.84 L341.00 212.70 L342.50 212.57 L344.00 212.44 L345.50 212.32 L347.00 212.19 L348.50 212.08 L350.00 211.97 L351.50 211.86 L353.00 211.76 L354.50 211.66 L356.00 211.56 L357.50 211.47 L359.00 211.39 L360.50 211.30 L362.00 211.23 L363.50 211.15 L365.00 211.08 L366.50 211.00 L368.00 210.93 L369.50 210.86 L371.00 210.79 L372.50 210.71 L374.00 210.63 L375.50 210.55 L377.00 210.47 L378.50 210.38 L380.00 210.28 L381.50 210.17 L383.00 210.06 L384.50 209.94 L386.00 209.81 L387.50 209.67 L389.00 209.52 L390.50 209.36 L392.00 209.19 L393.50 209.00 L395.00 208.81 L396.50 208.61 L398.00 208.40 L399.50 208.18 L401.00 207.97 L402.50 207.75 L404.00 207.53 L405.50 207.31 L407.00 207.09 L408.50 206.87 L410.00 206.66 L411.50 206.45 L413.00 206.25 L414.50 206.05 L416.00 205.87 L417.50 205.68 L419.00 205.51 L420.50 205.34 L422.00 205.17 L423.50 205.02 L425.00 204.87 L426.50 204.73 L428.00 204.60 L429.50 204.48 L431.00 204.36 L432.50 204.26 L434.00 204.16 L435.50 204.07 L437.00 203.99 L438.50 203.92 L440.00 203.86 L441.50 203.81 L443.00 203.77 L444.50 203.74 L446.00 203.72 L447.50 203.71 L449.00 203.71 L450.50 203.72 L452.00 203.73 L453.50 203.75 L455.00 203.78 L456.50 203.80 L458.00 203.83 L459.50 203.85 L461.00 203.88 L462.50 203.89 L464.00 203.91 L465.50 203.92 L467.00 203.91 L468.50 203.90 L470.00 203.88 L471.50 203.85 L473.00 203.81 L474.50 203.75 L476.00 203.68 L477.50 203.61 L479.00 203.52 L480.50 203.43 L482.00 203.33 L483.50 203.22 L485.00 203.10 L486.50 202.98 L488.00 202.85 L489.50 202.72 L491.00 202.58 L492.50 202.44 L494.00 202.30 L495.50 202.15 L497.00 202.00 L498.50 201.85 L500.00 201.70 L501.50 201.55 L503.00 201.41 L504.50 201.26 L506.00 201.11 L507.50 200.97 L509.00 200.83 L510.50 200.69 L512.00 200.56 L513.50 200.44 L515.00 200.32 L516.50 200.20 L518.00 200.10 L519.50 200.00 L521.00 199.91 L522.50 199.82 L524.00 199.75 L525.50 199.68 L527.00 199.61 L528.50 199.55 L530.00 199.50 L531.50 199.45 L533.00 199.40 L534.50 199.35 L536.00 199.31 L537.50 199.27 L539.00 199.22 L540.50 199.18 L542.00 199.13 L543.50 199.08 L545.00 199.03 L546.50 198.98 L548.00 198.92 L549.50 198.85 L551.00 198.78 L552.50 198.71 L554.00 198.62 L555.50 198.53 L557.00 198.43 L558.50 198.32 L560.00 198.20 L561.50 198.07 L563.00 197.93 L564.50 197.77 L566.00 197.60 L567.50 197.42 L569.00 197.23 L570.50 197.01 L572.00 196.79 L573.50 196.54 L575.00 196.28 L576.50 196.01 L578.00 195.72 L579.50 195.41 L581.00 195.08 L582.50 194.73 L584.00 194.37 L585.50 193.99 L587.00 193.59 L588.50 193.18 L590.00 192.74 L591.50 192.29 L593.00 191.81 L594.50 191.32 L596.00 190.81 L597.50 190.27 L599.00 189.73 L600.50 189.17 L602.00 188.59 L603.50 188.01 L605.00 187.42 L606.50 186.82 L608.00 186.22 L609.50 185.62 L611.00 185.02 L612.50 184.43 L614.00 183.84 L615.50 183.25 L617.00 182.68 L618.50 182.12 L620.00 181.56 L621.50 181.02 L623.00 180.49 L624.50 179.97 L626.00 179.46 L627.50 178.97 L629.00 178.49 L630.50 178.03 L632.00 177.58 L633.50 177.15 L635.00 176.74 L636.50 176.34 L638.00 175.96 L639.50 175.60 L641.00 175.26 L642.50 174.93 L644.00 174.63 L645.50 174.35 L647.00 174.09 L648.50 173.86 L650.00 173.64 L651.50 173.45 L653.00 173.29 L654.50 173.15 L656.00 173.03 L657.50 172.94 L659.00 172.88 L660.50 172.84 L662.00 172.84 L663.50 172.86 L665.00 172.92 L666.50 173.01 L668.00 173.14 L669.50 173.31 L671.00 173.52 L672.50 173.78 L674.00 174.08 L675.50 174.43 L677.00 174.83 L678.50 175.28 L680.00 175.79 L681.50 176.35 L683.00 176.97 L684.50 177.65 L686.00 178.37 L687.50 179.14 L689.00 179.96 L690.50 180.81 L692.00 181.72 L693.50 182.65 L695.00 183.63 L696.50 184.64 L698.00 185.68 L699.50 186.75 L701.00 187.85 L702.50 188.97 L704.00 190.11 L705.50 191.26 L707.00 192.42 L708.50 193.58 L710.00 194.74 L711.50 195.90 L713.00 197.04 L714.50 198.17 L716.00 199.28 L717.50 200.36 L719.00 201.41 L720.50 202.42 L722.00 203.40 L723.50 204.33 L725.00 205.23 L726.50 206.09 L728.00 206.90 L729.50 207.67 L731.00 208.40 L732.50 209.09 L734.00 209.74 L735.50 210.35 L737.00 210.92 L738.50 211.45 L740.00 211.94 L741.50 212.39 L743.00 212.81 L744.50 213.20 L746.00 213.55 L747.50 213.86 L749.00 214.15 L750.50 214.40 L752.00 214.61 L753.50 214.81 L755.00 214.97 L756.50 215.11 L758.00 215.23 L759.50 215.33 L761.00 215.41 L762.50 215.48 L764.00 215.53 L765.50 215.58 L767.00 215.62 L768.50 215.65 L770.00 215.68 L771.50 215.70 L773.00 215.73 L774.50 215.77 L776.00 215.81 L777.50 215.85 L779.00 215.91 L780.50 215.99 L782.00 216.07 L783.50 216.17 L785.00 216.29 L786.50 216.41 L788.00 216.55 L789.50 216.70 L791.00 216.86 L792.50 217.02 L794.00 217.20 L795.50 217.38 L797.00 217.58 L798.50 217.78 L800.00 217.98 L801.50 218.19 L803.00 218.41 L804.50 218.63 L806.00 218.85 L807.50 219.08 L809.00 219.32 L810.50 219.55 L812.00 219.79 L813.50 220.04 L815.00 220.28 L816.50 220.53 L818.00 220.78 L819.50 221.04 L821.00 221.29 L822.50 221.55 L824.00 221.81 L825.50 222.07 L827.00 222.33 L828.50 222.59 L830.00 222.85 L831.50 223.11 L833.00 223.37 L834.50 223.63 L836.00 223.89 L837.50 224.15 L839.00 224.40 L840.50 224.66 L842.00 224.91 L843.50 225.16 L845.00 225.41 L846.50 225.66 L848.00 225.90 L849.50 226.14 L851.00 226.38 L852.50 226.61 L854.00 226.83 L855.50 227.03 L857.00 227.22 L858.50 227.39 L860.00 227.54 L861.50 227.66 L863.00 227.74 L864.50 227.79 L866.00 227.80 L867.50 227.77 L869.00 227.69 L870.50 227.56 L872.00 227.38 L873.50 227.14 L875.00 226.84 L876.50 226.48 L878.00 226.05 L879.50 225.58 L881.00 225.05 L882.50 224.48 L884.00 223.87 L885.50 223.22 L887.00 222.55 L888.50 221.86 L890.00 221.15 L891.50 220.42 L893.00 219.69 L894.50 218.95 L896.00 218.22 L897.50 217.50 L899.00 216.77 L900.50 216.06 L902.00 215.35 L903.50 214.65 L905.00 213.96 L906.50 213.27 L908.00 212.60 L909.50 211.93 L911.00 211.28 L912.50 210.64 L914.00 210.00 L915.50 209.38 L917.00 208.78 L918.50 208.18 L920.00 207.60 L921.50 207.04 L923.00 206.49 L924.50 205.95 L926.00 205.43 L927.50 204.93 L929.00 204.45 L930.50 203.98 L932.00 203.54 L933.50 203.11 L935.00 202.70 L936.50 202.31 L938.00 201.94 L939.50 201.60 L941.00 201.27 L942.50 200.97 L944.00 200.70 L945.50 200.44 L947.00 200.21 L948.50 200.01 L950.00 199.83 L951.50 199.67 L953.00 199.53 L954.50 199.40 L956.00 199.30 L957.50 199.21 L959.00 199.13 L960.50 199.06 L962.00 199.00 L963.50 198.96 L965.00 198.91 L966.50 198.87 L968.00 198.84 L969.50 198.81 L971.00 198.77 L972.50 198.73 L974.00 198.69 L975.50 198.65 L977.00 198.60 L978.50 198.54 L980.00 198.46 L981.50 198.38 L983.00 198.28 L984.50 198.17 L986.00 198.04 L987.50 197.89 L989.00 197.72 L990.50 197.53 L992.00 197.32 L993.50 197.08 L995.00 196.82 L996.50 196.55 L998.00 196.26 L999.50 195.96 L1001.00 195.64 L1002.50 195.31 L1004.00 194.97 L1005.50 194.62 L1007.00 194.27 L1008.50 193.91 L1010.00 193.54 L1011.50 193.17 L1013.00 192.80 L1014.50 192.44 L1016.00 192.07 L1017.50 191.71 L1019.00 191.35 L1020.50 191.01 L1022.00 190.66 L1023.50 190.33 L1025.00 190.00 L1026.50 189.67 L1028.00 189.34 L1029.50 189.02 L1031.00 188.69 L1032.50 188.36 L1034.00 188.02 L1035.50 187.68 L1037.00 187.33 L1038.50 186.97 L1040.00 186.60 L1041.50 186.21 L1043.00 185.82 L1044.50 185.40 L1046.00 184.98 L1047.50 184.54 L1049.00 184.08 L1050.50 183.62 L1052.00 183.14 L1053.50 182.65 L1055.00 182.15 L1056.50 181.64 L1058.00 181.12 L1059.50 180.59 L1061.00 180.06 L1062.50 179.51 L1064.00 178.97 L1065.50 178.42 L1067.00 177.88 L1068.50 177.34 L1070.00 176.80 L1071.50 176.27 L1073.00 175.76 L1074.50 175.25 L1076.00 174.76 L1077.50 174.29 L1079.00 173.84 L1080.50 173.40 L1082.00 173.00" fill="none" stroke="#12a1e6" stroke-width="2"/>
<circle cx="347.9" cy="137.9" r="4" fill="#6b7f8c"/><circle cx="445.9" cy="119.8" r="4" fill="#6b7f8c"/><circle cx="548.8" cy="147.8" r="4" fill="#6b7f8c"/><circle cx="642.8" cy="96.9" r="4" fill="#6b7f8c"/><circle cx="743" cy="59.9" r="4" fill="#6b7f8c"/><circle cx="841" cy="92" r="4" fill="#6b7f8c"/><circle cx="946.8" cy="89.8" r="4" fill="#6b7f8c"/><circle cx="1041" cy="62.7" r="4" fill="#6b7f8c"/><circle cx="347.9" cy="211.9" r="4" fill="#12a1e6"/><circle cx="445.9" cy="203.8" r="4" fill="#12a1e6"/><circle cx="548.8" cy="198.7" r="4" fill="#12a1e6"/><circle cx="643" cy="174.8" r="4" fill="#12a1e6"/><circle cx="743" cy="212.8" r="4" fill="#12a1e6"/><circle cx="841" cy="224.8" r="4" fill="#12a1e6"/><circle cx="946.8" cy="200.7" r="4" fill="#12a1e6"/><circle cx="1043" cy="186" r="4" fill="#12a1e6"/><rect x="312" y="0" width="1" height="248" fill="#aaa"/><rect x="313" y="248" width="771" height="1" fill="#aaa"/></svg>
<div class="a" style="left:1128px;top:-20px;width:269px;height:310px;background:#fff;border-radius:5px;"></div><div class="t" style="left:1143.0px;top:-5.20px;font-size:13px;line-height:13px;color:#555;">MS1031</div>
<div class="t" style="left:1143.0px;top:19.70px;font-size:13px;line-height:13px;color:#555;">PayStand</div>
<div class="t" style="left:1143.0px;top:44.60px;font-size:13px;line-height:13px;color:#555;">P.O. Box 989746</div>
<div class="t" style="left:1143.0px;top:69.50px;font-size:13px;line-height:13px;color:#555;">West Sacramento, CA 95798</div>
<div class="a" style="left:229px;top:320px;width:1166px;height:460px;background:#fff;border-radius:4px 4px 0 0;"></div><div class="a" style="left:229px;top:320px;width:1166px;height:40px;background:#4d4d4d;border-radius:4px 4px 0 0;"></div><div class="t" style="left:244.0px;top:334.10px;font-size:13px;line-height:13px;color:#fff;letter-spacing:0.22px;-webkit-text-stroke:0.15px #fff;">Processed checks</div>
<div class="a" style="left:229px;top:405px;width:1166px;height:1px;background:#dcdcdc;"></div><div class="t" style="left:249.0px;top:382.30px;font-size:15px;line-height:15px;color:#12a1e6;letter-spacing:0.05px;-webkit-text-stroke:0.2px #12a1e6;">OVERVIEW</div>
<div class="a" style="left:246px;top:404px;width:90px;height:3px;background:#12a1e6;"></div><div class="t" style="left:383.0px;top:382.30px;font-size:15px;line-height:15px;color:#aaa;letter-spacing:0.4px;-webkit-text-stroke:0.2px #aaa;">UNMATCHED</div>
<div class="t" style="left:532.0px;top:382.30px;font-size:15px;line-height:15px;color:#aaa;letter-spacing:0.35px;-webkit-text-stroke:0.2px #aaa;">OVERPAYMENT</div>
<div class="t" style="left:244.0px;top:438.35px;font-size:14px;line-height:14px;color:#555;letter-spacing:0.07px;">Showing results based on the following filter options:</div>
<div class="t" style="left:244.0px;top:464.80px;font-size:13px;line-height:13px;color:#555;font-weight:bold;letter-spacing:-0.2px;-webkit-text-stroke-width:0;">Date Preset:</div>
<div class="t" style="left:326.0px;top:464.80px;font-size:13px;line-height:13px;color:#555;">Past 12 months</div>
<div class="a" style="left:427px;top:465px;width:1px;height:14px;background:#555;"></div><div class="t" style="left:432.0px;top:464.80px;font-size:13px;line-height:13px;color:#555;font-weight:bold;letter-spacing:-0.4px;-webkit-text-stroke-width:0;">Statuses:</div>
<div class="t" style="left:494.0px;top:464.80px;font-size:13px;line-height:13px;color:#555;letter-spacing:0.05px;">In Process, Check Bounced, Pending Match, Insufficient Funds, Unexpected Fail, Reconciliated, Overpayment</div>
<div class="a" style="left:241px;top:498px;width:1134px;height:1px;background:#dcdcdc;"></div><div class="t" style="left:1243.0px;top:417.15px;font-size:14px;line-height:14px;color:#1f70a6;letter-spacing:0.9px;-webkit-text-stroke:0.3px #1f70a6;text-decoration:underline;">Show Options</div>
<svg class="a" style="left:1348px;top:414px" width="20" height="20" viewBox="0 0 20 20">
<g fill="#8c8c8c" transform="translate(10 9.9)">
<circle r="6.4"/>
<rect x="-1.8" y="-7.85" width="3.6" height="15.7"/>
<rect x="-1.8" y="-7.85" width="3.6" height="15.7" transform="rotate(45)"/>
<rect x="-1.8" y="-7.85" width="3.6" height="15.7" transform="rotate(90)"/>
<rect x="-1.8" y="-7.85" width="3.6" height="15.7" transform="rotate(135)"/>
</g>
<circle cx="10" cy="9.9" r="3.0" fill="#fff"/>
</svg><div class="t" style="left:1219.0px;top:526.75px;font-size:14px;line-height:14px;color:#1f70a6;letter-spacing:0.9px;-webkit-text-stroke:0.3px #1f70a6;text-decoration:underline;">Download Report</div>
<svg class="a" style="left:1351px;top:529px" width="14" height="13" viewBox="0 0 14 13">
<path d="M5.1 0 H7.9 V4.2 H10.9 L6.5 8.9 L2.1 4.2 H5.1 Z" fill="#8c8c8c"/>
<path d="M0.2 9.2 H4.4 L6.5 10.4 L8.8 9.2 H13.8 V12.8 H0.2 Z" fill="#8c8c8c"/>
<circle cx="10.3" cy="11.5" r="0.65" fill="#fff"/><circle cx="12.3" cy="11.5" r="0.65" fill="#fff"/>
</svg><div class="t" style="left:49.3px;width:600px;text-align:center;top:572.00px;font-size:13px;line-height:13px;color:#555;letter-spacing:0.1px;">Date</div>
<div class="t" style="left:451.0px;top:572.00px;font-size:13px;line-height:13px;color:#555;letter-spacing:0.2px;">Payer</div>
<div class="t" style="left:467.5px;width:600px;text-align:center;top:572.00px;font-size:13px;line-height:13px;color:#555;letter-spacing:0.2px;">Status</div>
<div class="t" style="left:645.5px;width:600px;text-align:center;top:572.00px;font-size:13px;line-height:13px;color:#555;letter-spacing:0.25px;">Check Amount</div>
<div class="t" style="left:824.5px;width:600px;text-align:center;top:572.00px;font-size:13px;line-height:13px;color:#555;letter-spacing:0.25px;">Applied Amount</div>
<div class="t" style="left:995.0px;width:600px;text-align:center;top:572.00px;font-size:13px;line-height:13px;color:#555;letter-spacing:0.25px;">Attatchments</div>
<div class="a" style="left:241px;top:596px;width:1132px;height:54px;border:1px solid #dcdcdc;background:#fff;"></div><div class="a" style="left:278px;top:596px;width:1px;height:55px;background:#dcdcdc;"></div><div class="a" style="left:418px;top:596px;width:1px;height:55px;background:#dcdcdc;"></div><div class="a" style="left:679px;top:596px;width:1px;height:55px;background:#dcdcdc;"></div><div class="a" style="left:856px;top:596px;width:1px;height:55px;background:#dcdcdc;"></div><div class="a" style="left:1034px;top:596px;width:1px;height:55px;background:#dcdcdc;"></div><div class="a" style="left:1215px;top:596px;width:1px;height:55px;background:#dcdcdc;"></div><svg class="a" style="left:255px;top:620px" width="13" height="9" viewBox="0 0 13 9"><path d="M0 0.5 H12.5 L6.25 8 Z" fill="#12a1e6"/></svg><div class="t" style="left:48.0px;width:600px;text-align:center;top:610.00px;font-size:13px;line-height:13px;color:#555;letter-spacing:0.1px;">2020-10-01</div>
<div class="t" style="left:48.0px;width:600px;text-align:center;top:624.60px;font-size:13px;line-height:13px;color:#555;letter-spacing:0.1px;">03:01:09pm</div>
<div class="t" style="left:451.0px;top:616.80px;font-size:13px;line-height:13px;color:#1f70a6;letter-spacing:0.65px;text-decoration:underline;">Antonio Roberts</div>
<div class="t" style="left:468.0px;width:600px;text-align:center;top:618.00px;font-size:13px;line-height:13px;color:#62a843;letter-spacing:0.55px;">CASH APPLIED</div>
<div class="t" style="left:646.0px;width:600px;text-align:center;top:618.15px;font-size:14px;line-height:14px;color:#555;">$204.37</div>
<div class="t" style="left:996.0px;width:600px;text-align:center;top:618.15px;font-size:14px;line-height:14px;color:#1f70a6;letter-spacing:0.95px;-webkit-text-stroke:0.25px #1f70a6;text-decoration:underline;">3 Attached files</div>
<div class="a" style="left:241px;top:652px;width:1132px;height:108px;border:1px solid #d4d4d4;border-bottom:2px solid #d0d0d0;border-top:none;background:#f4f4f4;"></div><div class="a" style="left:278px;top:677px;width:260px;height:10px;background:#8cc36a;border-radius:4px 0 0 4px;"></div><div class="a" style="left:540px;top:677px;width:260px;height:10px;background:#8cc36a;border-radius:0;"></div><div class="a" style="left:802px;top:677px;width:260px;height:10px;background:#8cc36a;border-radius:0;"></div><div class="a" style="left:1064px;top:677px;width:260px;height:10px;background:#d6d6d6;border-radius:0;"></div><div class="t" style="left:277.0px;top:699.00px;font-size:13px;line-height:13px;color:#555;letter-spacing:0.25px;">Receive Funds</div>
<div class="t" style="left:277.0px;top:726.00px;font-size:13px;line-height:13px;color:#64aa45;font-weight:bold;letter-spacing:0.55px;-webkit-text-stroke-width:0;">FUNDS RECEIVED</div>
<div class="t" style="left:539.0px;top:699.00px;font-size:13px;line-height:13px;color:#555;letter-spacing:0.25px;">Invoice Match</div>
<div class="t" style="left:539.0px;top:726.00px;font-size:13px;line-height:13px;color:#64aa45;font-weight:bold;letter-spacing:0.55px;-webkit-text-stroke-width:0;">MATCHED</div>
<div class="t" style="left:801.0px;top:699.00px;font-size:13px;line-height:13px;color:#555;letter-spacing:0.25px;">Cash Application</div>
<div class="t" style="left:801.0px;top:726.00px;font-size:13px;line-height:13px;color:#64aa45;font-weight:bold;letter-spacing:0.55px;-webkit-text-stroke-width:0;">CASH APPLIED</div>
<div class="t" style="left:1063.0px;top:699.00px;font-size:13px;line-height:13px;color:#555;letter-spacing:0.25px;">Bank Reconciliation</div>
<div class="t" style="left:1063.0px;top:726.00px;font-size:13px;line-height:13px;color:#bdbdbd;font-weight:bold;letter-spacing:0.55px;-webkit-text-stroke-width:0;">PENDING</div>
<div class="a" style="left:206px;top:741px;width:1235px;height:21px;background:linear-gradient(rgba(0,0,0,0),rgba(0,0,0,0.065));z-index:5;"></div><div class="a" style="left:1409px;top:0;width:1px;height:762px;background:#e9e9e9;"></div><div class="a" style="left:1410px;top:0;width:15px;height:762px;background:#f9f9f9;"></div><div class="a" style="left:1425px;top:0;width:1px;height:762px;background:#ececec;"></div><div class="a" style="left:1426px;top:0;width:14px;height:762px;background:#f9f9f9;"></div><div class="a" style="left:1440px;top:0;width:1px;height:762px;background:#ececec;"></div><div class="a" style="left:1413px;top:-10px;width:8px;height:187px;background:#b5b5b5;border-radius:4px;"></div></body></html>
